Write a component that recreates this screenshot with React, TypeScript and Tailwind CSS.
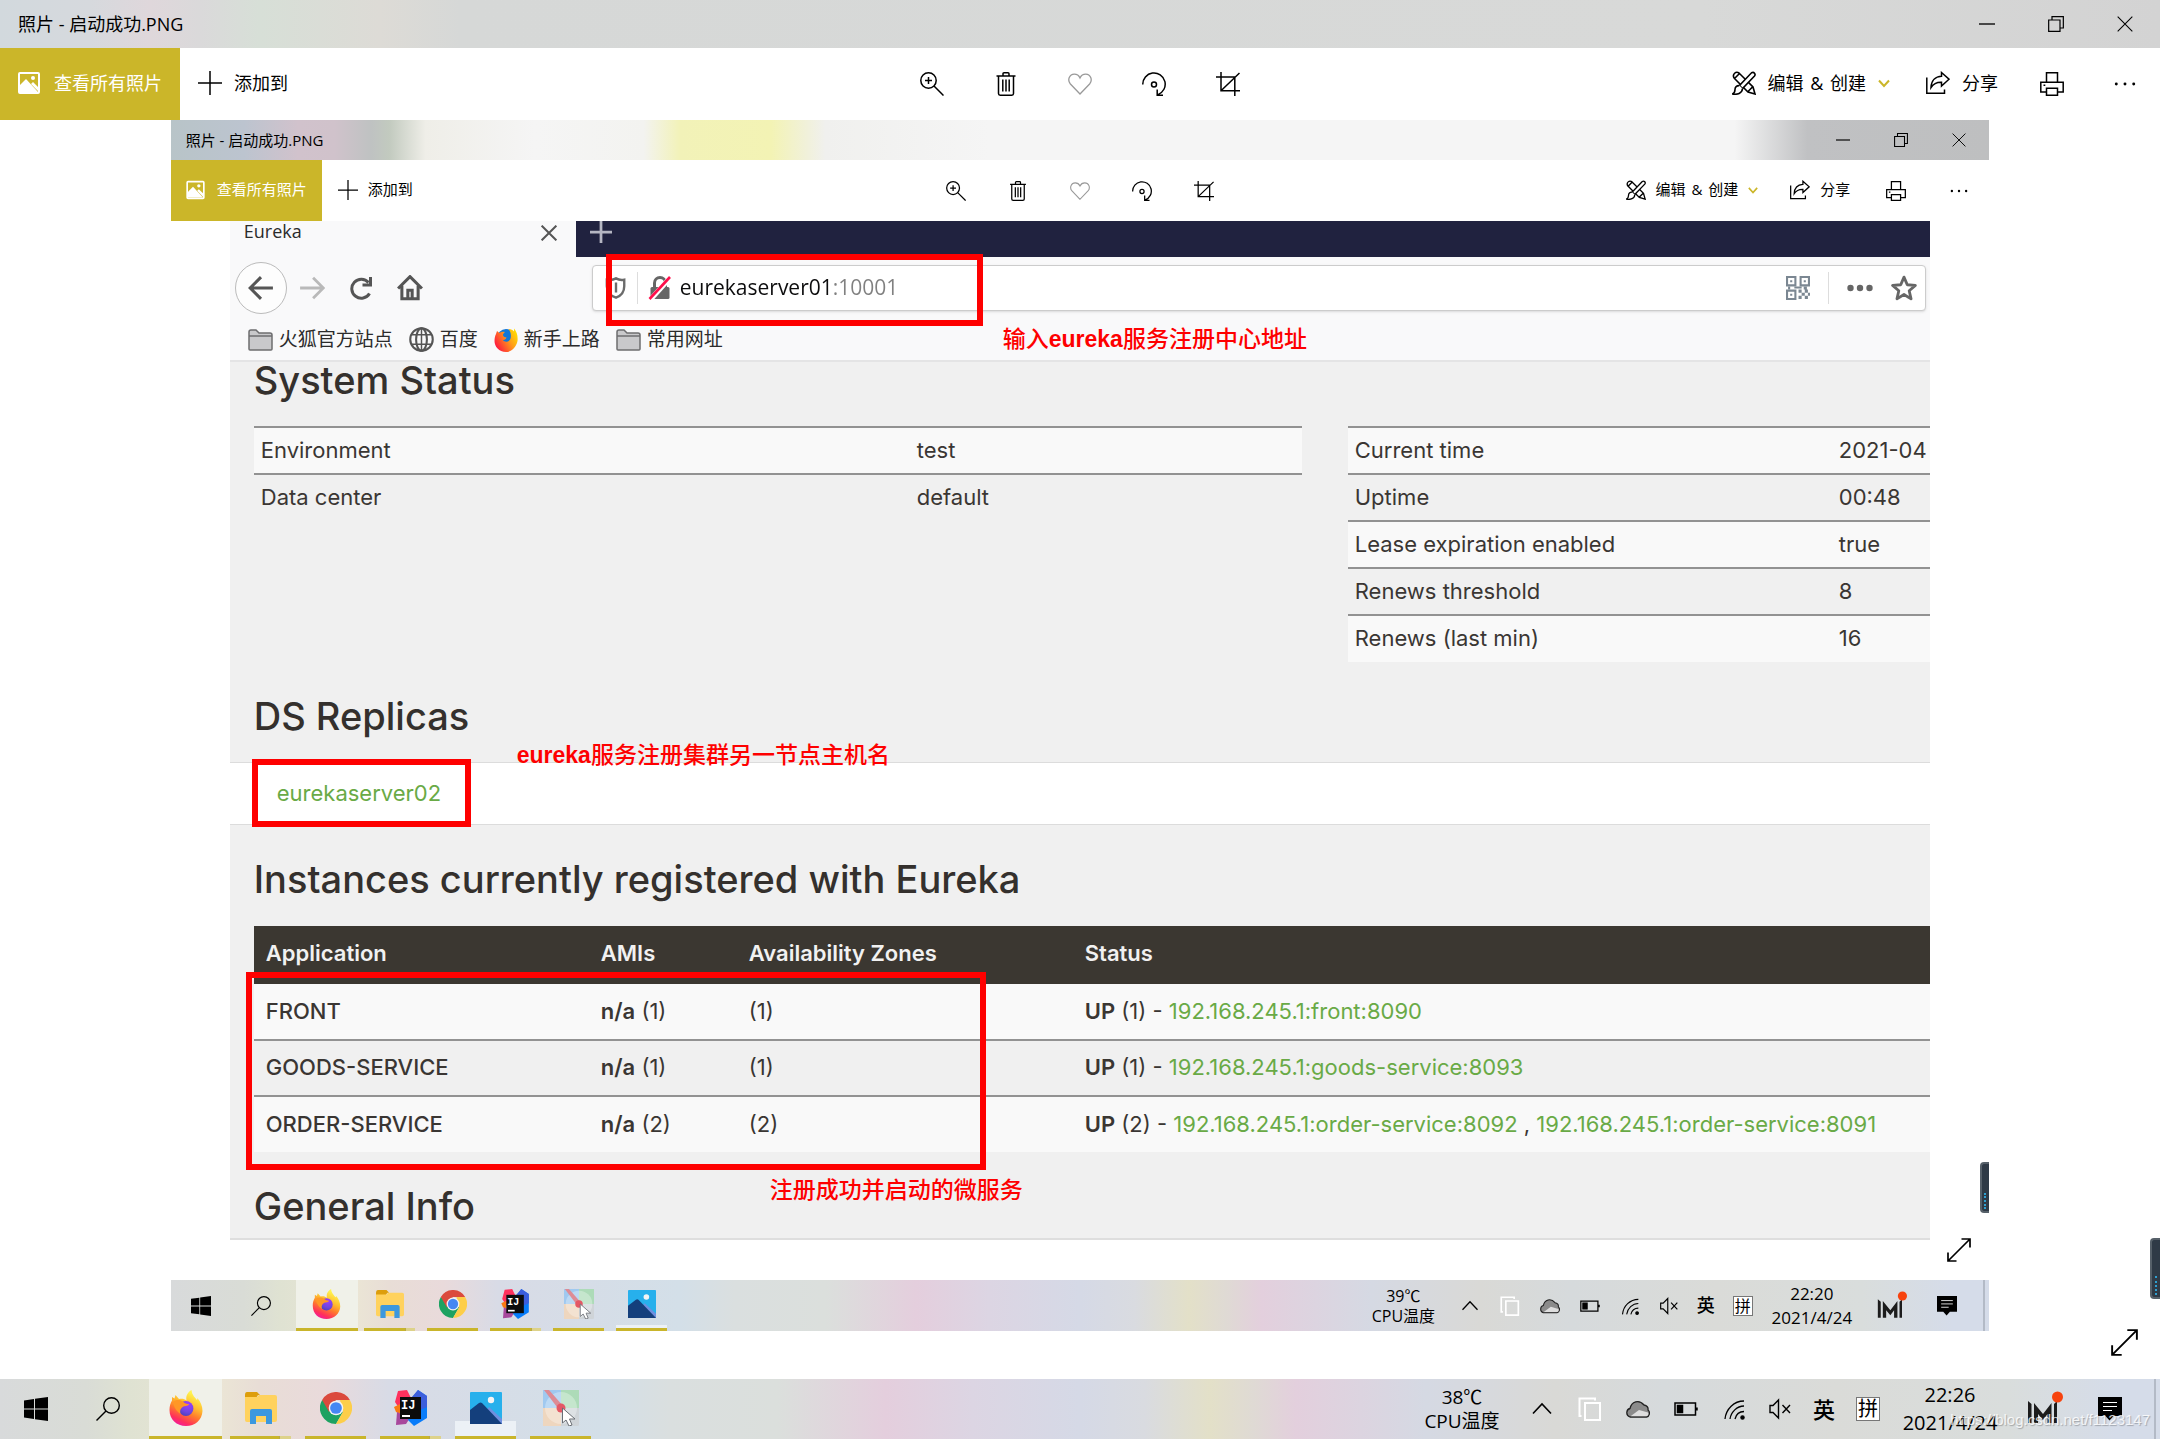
import React, { useId } from "react";

type Size = "lg" | "sm";

/* ---------- line icons of the photo viewer ---------- */

function Line({ className, children, w = 1.5 }: { className: string; children: React.ReactNode; w?: number }) {
  return (
    <svg viewBox="0 0 24 24" className={className} fill="none" stroke="currentColor" strokeWidth={w} aria-hidden="true">
      {children}
    </svg>
  );
}

const PictureIcon = ({ className }: { className: string }) => (
  <svg viewBox="0 0 22 24" className={className} aria-hidden="true">
    <rect x="1" y="2" width="20" height="20" rx="1" fill="none" stroke="white" strokeWidth="2" />
    <path d="M2 14 L8 8 L20 21 H2 Z" fill="white" />
    <path d="M13 13 L15 11 L20 16 V20 Z" fill="white" />
    <circle cx="15" cy="7" r="2" fill="white" />
  </svg>
);

const ZoomIcon = ({ className }: { className: string }) => (
  <Line className={className}>
    <circle cx="8.5" cy="8.5" r="7.7" />
    <path d="M14 14 L23.5 23.5 M8.5 5 V12 M5 8.5 H12" />
  </Line>
);

const TrashIcon = ({ className }: { className: string }) => (
  <Line className={className}>
    <path d="M2.5 4 H21.5 M4.5 4 V21.5 Q4.5 23.2 6.2 23.2 H17.8 Q19.5 23.2 19.5 21.5 V4 M9 4 V1.8 Q9 0.8 10 0.8 H14 Q15 0.8 15 1.8 V4 M8.8 7.5 V19.5 M12 7.5 V19.5 M15.2 7.5 V19.5" />
  </Line>
);

const HeartIcon = ({ className }: { className: string }) => (
  <Line className={className} w={1.3}>
    <path d="M12 22 L2.4 12 C-1 8 1.5 2.2 6.3 2.2 C9 2.2 11 3.8 12 6 C13 3.8 15 2.2 17.7 2.2 C22.5 2.2 25 8 21.6 12 Z" />
  </Line>
);

const RotateIcon = ({ className }: { className: string }) => (
  <Line className={className}>
    <path d="M0.8 12.5 A11.2 11.2 0 1 1 16 22.6 M15.2 17.5 V23.2 H21" />
    <circle cx="12" cy="12.5" r="2.5" />
  </Line>
);

const CropIcon = ({ className }: { className: string }) => (
  <Line className={className}>
    <path d="M5 0 V18.8 H24 M0 5 H18.8 V24 M5 18.8 L23.5 1" />
  </Line>
);

const EditIcon = ({ className }: { className: string }) => (
  <Line className={className} w={1.6}>
    <path d="M2 7 C0 3 4 0 7 2 L21 16 L23 23 L16 21 L2 7 M2.5 7.5 L7.5 2.5 M16 20.5 L20.7 15.8" />
    <path d="M19.5 1.8 C22 0.5 24 3 22.5 5 L10.5 17.5 L7.5 14.5 Z" fill="white" />
    <path d="M7.3 14.6 C4.6 14.4 3 16.2 3 18.5 C3 21 1.5 22.5 0.5 23 C5 23.8 10.4 22.5 10.5 17.6" fill="white" />
  </Line>
);

const ShareIcon = ({ className }: { className: string }) => (
  <Line className={className}>
    <path d="M0.8 6.5 V22.2 H18.5 V18.5" />
    <path d="M15.5 1.5 L23 8.2 L15.5 15 V11.2 C10 11 7.5 12.5 5 16.5 C5.3 9.5 9.5 5.6 15.5 5.3 Z" />
  </Line>
);

const PrintIcon = ({ className }: { className: string }) => (
  <Line className={className}>
    <path d="M6.5 10 V0.8 H17.5 V10 M6.5 20 H0.8 V10.2 H23.2 V20 H17.5 M6.5 16.2 H17.5 V23.2 H6.5 Z M3.5 13.2 H5.3" />
  </Line>
);

const ChevronDown = ({ className }: { className: string }) => (
  <Line className={className} w={4}>
    <path d="M2 7 L12 18 L22 7" />
  </Line>
);

const MoreIcon = ({ className }: { className: string }) => (
  <svg viewBox="0 0 24 24" className={className} aria-hidden="true">
    <circle cx="2.5" cy="12" r="1.6" />
    <circle cx="12" cy="12" r="1.6" />
    <circle cx="21.5" cy="12" r="1.6" />
  </svg>
);

const PlusIcon = ({ className }: { className: string }) => (
  <Line className={className}>
    <path d="M12 0 V24 M0 12 H24" />
  </Line>
);

const MinimizeIcon = ({ className }: { className: string }) => (
  <Line className={className} w={2}>
    <path d="M0 12 H24" />
  </Line>
);

const RestoreIcon = ({ className }: { className: string }) => (
  <Line className={className} w={1.8}>
    <path d="M1 6 H18 V23 H1 Z M6 6 V1 H23 V18 H18" />
  </Line>
);

const CloseIcon = ({ className, w = 1.6 }: { className: string; w?: number }) => (
  <Line className={className} w={w}>
    <path d="M1 1 L23 23 M23 1 L1 23" />
  </Line>
);

const ExpandIcon = ({ className }: { className: string }) => (
  <Line className={className} w={1.7}>
    <path d="M1 23 L23 1 M14.5 1 H23 V9.5 M1 14.5 V23 H9.5" />
  </Line>
);

/* ---------- taskbar icons ---------- */

const WindowsIcon = ({ className }: { className: string }) => (
  <svg viewBox="0 0 24 24" className={className} aria-hidden="true">
    <path d="M0 3.4 L10 2 V11.5 H0 Z M11 1.8 L24 0 V11.5 H11 Z M0 12.5 H10 V22 L0 20.6 Z M11 12.5 H24 V24 L11 22.2 Z" />
  </svg>
);

const SearchIcon = ({ className }: { className: string }) => (
  <Line className={className} w={1.4}>
    <circle cx="15.5" cy="8.5" r="7.8" />
    <path d="M10 14 L0.5 23.5" />
  </Line>
);

function FirefoxIcon({ className }: { className: string }) {
  const id = useId();
  return (
    <svg viewBox="0 0 34 36" className={className} aria-hidden="true">
      <defs>
        <linearGradient id={id + "a"} x1="0.75" y1="0" x2="0.3" y2="1">
          <stop offset="0.1" stopColor="#fff44f" />
          <stop offset="0.4" stopColor="#ffbd2f" />
          <stop offset="0.62" stopColor="#ff7a2c" />
          <stop offset="0.85" stopColor="#ff2f5c" />
          <stop offset="1" stopColor="#f01ba0" />
        </linearGradient>
        <radialGradient id={id + "b"} cx="0.65" cy="0.2" r="0.9">
          <stop offset="0" stopColor="#a03cff" />
          <stop offset="0.6" stopColor="#7046e0" />
          <stop offset="1" stopColor="#4a3fb5" />
        </radialGradient>
      </defs>
      <path d="M0.5 20 C0.5 16 1.5 13 3 10.5 L3 7 L5.5 8.5 L6.5 5 L10 9 C13 8.2 15.5 8.8 17.5 10.5 C16.5 5.5 19 2 22.5 0 C22.8 5 26.5 8 28 10 C28.4 9.4 28.4 8.8 28.3 8 C31.5 11.5 33.5 16 33.5 21 C33 30 26 36 17 36 C7.5 36 0.5 29.5 0.5 20 Z" fill={"url(#" + id + "a)"} />
      <circle cx="17" cy="18.5" r="7.4" fill={"url(#" + id + "b)"} />
      <path d="M4 12 C7 9 12 10 14 11.5 C15.5 13.5 18 14 20 14 C19.5 16 16.5 16 14.5 16.5 C12 18 10.5 20 11.5 24 C7 21 5 17 4 12 Z" fill="#ff9726" />
    </svg>
  );
}

const ExplorerIcon = ({ className }: { className: string }) => (
  <svg viewBox="0 0 32 32" className={className} aria-hidden="true">
    <path d="M0 3 Q0 0 2 0 H12 L15 3 H13 L11 6 H0 Z" fill="#dd9e0c" />
    <path d="M0 5 H12 L14 3 H30 Q32 3 32 5 V28 Q32 30 30 30 H2 Q0 30 0 28 Z" fill="#ffd25e" />
    <path d="M5 32 V19 Q5 17 7 17 H25 Q27 17 27 19 V32 H21 V24 H11 V32 Z" fill="#3c98de" />
  </svg>
);

const ChromeIcon = ({ className }: { className: string }) => (
  <svg viewBox="0 0 48 48" className={className} aria-hidden="true">
    <path d="M3.2 12 A24 24 0 0 0 24 48 L34.4 30 L24 24 Z" fill="#1da261" />
    <path d="M44.8 12 A24 24 0 0 1 24 48 L34.4 30 L30 12 Z" fill="#fdce49" />
    <path d="M24 12 H44.8 A24 24 0 0 0 3.2 12 L13.6 30 Z" fill="#db4a3d" />
    <circle cx="24" cy="24" r="11" fill="#f3f3f3" />
    <circle cx="24" cy="24" r="8.8" fill="#4587f3" />
  </svg>
);

const IdeaIcon = ({ className }: { className: string }) => (
  <svg viewBox="0 0 34 36" className={className} aria-hidden="true">
    <path d="M4 1 L13 0 L17 8 L9 24 L1 12 Z" fill="#fe315d" />
    <path d="M0 17 L6 14 V24 L2 22 Z" fill="#f97a12" />
    <path d="M3 22 L16 28 L12 34 L2 35 Z" fill="#a8489c" />
    <path d="M24 0 L33 6 L33 28 L20 36 L14 30 L18 8 Z" fill="#087cfa" />
    <path d="M24 0 L33 6 V17 L26 20 L17 8 Z" fill="#3c5edc" />
    <rect x="6" y="7" width="21" height="22" fill="#0c0c0c" />
    <rect x="8" y="25" width="8" height="2" fill="white" />
    <text x="7" y="19" fontSize="12" fontWeight="700" fontFamily="Liberation Mono, monospace" fill="white">IJ</text>
  </svg>
);

const PhotosIcon = ({ className }: { className: string }) => (
  <svg viewBox="0 0 32 32" className={className} aria-hidden="true">
    <rect width="32" height="32" rx="1" fill="#27b0ec" />
    <path d="M15 20 L19 15 L32 27 V32 H15 Z" fill="#6f8fdf" />
    <path d="M0 18 L9 11 Q10.5 10 12 11 L32 32 H0 Z" fill="#143f7c" />
    <circle cx="21" cy="8" r="3.2" fill="#f4f4f4" />
  </svg>
);

const PointerAppIcon = ({ className }: { className: string }) => (
  <svg viewBox="0 0 36 36" className={className} aria-hidden="true">
    <rect width="36" height="36" rx="1.5" fill="#cfd4d8" />
    <rect width="18" height="18" fill="#a0c9f0" />
    <rect x="18" width="18" height="18" fill="#addbb8" />
    <rect y="18" width="18" height="18" fill="#eed6be" />
    <circle cx="18" cy="18" r="16" fill="white" opacity="0.3" />
    <path d="M1 0 H6 L21 17 L17 21 Z" fill="#dd8b95" />
    <circle cx="18" cy="18" r="4.5" fill="#e45866" />
    <path d="M19.5 18 V33 L23 30 L26 36 L29 35 L26.5 29 H32 Z" fill="white" stroke="#6b6f75" strokeWidth="1" />
  </svg>
);

/* ---------- tray icons ---------- */

const UpIcon = ({ className }: { className: string }) => (
  <Line className={className} w={1.6}>
    <path d="M3 16.5 L12 7 L21 16.5" />
  </Line>
);

const CopyIcon = ({ className }: { className: string }) => (
  <Line className={className} w={2}>
    <path d="M7 6 H22 V23 H7 Z" stroke="white" />
    <path d="M3.5 19 H1.5 V1.5 H17 V3.5" stroke="white" />
  </Line>
);

const CloudIcon = ({ className }: { className: string }) => (
  <svg viewBox="0 0 24 24" className={className} aria-hidden="true">
    <path d="M4 20 C-0.5 18.5 0 12.5 4 11.5 C5.5 4.5 13 2 18 8 C21 8.5 22.5 10.5 22 13 C24.5 15 23.5 19.5 20.5 20 Z" fill="#8b8b8b" stroke="#222" strokeWidth="1.3" />
    <path d="M4.5 19.2 L13 13 L22 15.5 C23 17 22 19 20.5 19.2 Z" fill="#dedede" />
  </svg>
);

const BatteryIcon = ({ className }: { className: string }) => (
  <Line className={className}>
    <path d="M1 6 H21.5 V18 H1 Z M23 10.5 V13.5" />
    <rect x="3.5" y="8.5" width="5" height="7" fill="currentColor" />
  </Line>
);

const WifiIcon = ({ className }: { className: string }) => (
  <Line className={className} w={1.3}>
    <path d="M3 22 C4 12 12 4 22 4 M8 22 C9 15 15 9 22 9 M13 22 C14 18 17 14.500 22 14.500" />
    <circle cx="20.5" cy="20.5" r="1.6" fill="currentColor" />
  </Line>
);

const MuteIcon = ({ className }: { className: string }) => (
  <Line className={className} w={1.4}>
    <path d="M2 8.5 H5 L10.5 3 V21 L5 15.500 H2 Z M14.5 8 L22 16 M22 8 L14.5 16" />
  </Line>
);

const MLogoIcon = ({ className }: { className: string }) => (
  <svg viewBox="0 0 36 36" className={className} aria-hidden="true">
    <path d="M1 10 L4.5 13 V32 H1 Z M7 12 L16 23 L24.5 12 V32 H20.5 V23 L16 29 L11 23 V32 H7 Z M27 13 L30 10 V32 H27 Z" fill="#1c1c1c" />
    <circle cx="30.5" cy="6" r="5.5" fill="#f7430e" />
  </svg>
);

const MessageIcon = ({ className }: { className: string }) => (
  <svg viewBox="0 0 24 24" className={className} aria-hidden="true">
    <path d="M0 0 H24 V19 H15.5 L11.5 23.5 L7.5 19 H0 Z" />
    <path d="M5 5.5 H19 M5 9.5 H19 M5 13.5 H14" stroke="white" strokeWidth="1" />
  </svg>
);

/* ---------- photo viewer window ---------- */

const look = {
  lg: {
    titleBar:
      "h-12 pl-[18px] text-[18px] bg-[linear-gradient(90deg,#d2d9dd_0px,#d6d9dd_90px,#dfd7db_150px,#dad9da_200px,#d7dfd7_260px,#dddbd6_380px,#d6d8d7_460px,#d8d9d8_1700px,#d3d3d3_2160px)]",
    winBtn: "w-[69px]",
    winIcon: "size-4",
    bar: "h-[72px] text-[18px]",
    gold: "pl-[18px] pr-[18px] gap-3.5",
    pic: "h-6 w-[22px]",
    add: "pl-[18px] gap-3",
    icon: "size-6",
    mid: "w-[74px]",
    right: "gap-9 pr-6",
    pair: "gap-3",
    chev: "size-3",
    print: "mx-1.5",
    more: "ml-2 w-[22px]",
    expand: "size-[27px] right-[22px] bottom-[23px]",
    gadget: "h-[61px] w-2.5 bottom-20",
    task: "h-[60px] bg-[linear-gradient(90deg,#d8dadb_0%,#d9dcd6_4%,#dfe2d2_6%,#ebe6d5_10%,#e8ddd6_12%,#e9dadb_15%,#d8dbe6_18%,#d3dfe8_28%,#dadfdf_31%,#dbdfdc_36%,#e4cedd_41%,#dcd5e3_45%,#d5d9e6_50%,#d9dbe0_53%,#e3e0c8_56%,#dfdad4_58%,#e3cfdd_60%,#d5d9e3_66%,#d9d9d6_72%,#d6dadc_77%,#dadbd8_85%,#d9dddc_93%,#d5dce9_98%)]",
    start: "w-[72px]",
    slots: "ml-[5px] gap-0.5",
    slot: "w-[73px]",
    line: "h-[3px] w-[61px]",
    app: "h-9 w-[34px]",
    app2: "size-8",
    app4: "size-9",
    temp: "w-[112px] text-[19px] leading-6",
    tray: "w-12",
    tray2: "w-11",
    trayIcon: "size-6",
    ime: "text-[22px]",
    imeBox: "size-6 text-[20px]",
    clock: "w-[120px] text-[20px] leading-7",
    mLogo: "w-[70px]",
    mIcon: "size-9",
    msg: "w-[60px]",
    end: "w-5",
  },
  sm: {
    titleBar:
      "h-10 pl-[15px] text-[15px] bg-[linear-gradient(90deg,#b8c4c8_0%,#bcc4cf_4%,#d1c2cc_7%,#d0c2cb_9%,#bfc2c2_11%,#c2cabf_12%,#efeee8_14%,#f5f5f5_20%,#f3f3f0_26%,#f2f2b8_28%,#f3f3b4_33%,#f0f0ee_36%,#f5f5f5_45%,#f5f5f5_86%,#c0c1c3_90%,#bebfc0_100%)]",
    winBtn: "w-[58px]",
    winIcon: "size-3.5",
    bar: "h-[61px] text-[15px]",
    gold: "pl-[15px] pr-[15px] gap-3",
    pic: "h-5 w-[19px]",
    add: "pl-4 gap-2.5",
    icon: "size-5",
    mid: "w-[62px]",
    right: "gap-8 pr-[21px]",
    pair: "gap-2.5",
    chev: "size-2.5",
    print: "mx-1",
    more: "ml-2 w-[18px]",
    expand: "size-6 right-[18px] bottom-[18px]",
    gadget: "h-[51px] w-[9px] bottom-[67px]",
    task: "h-[51px] bg-[linear-gradient(90deg,#d8dadb_0%,#d9dcd6_4%,#dfe2d2_6%,#ebe6d5_10%,#e8ddd6_12%,#e9dadb_15%,#d8dbe6_18%,#d3dfe8_28%,#dadfdf_31%,#dbdfdc_36%,#e4cedd_41%,#dcd5e3_45%,#d5d9e6_50%,#d9dbe0_53%,#e3e0c8_56%,#dfdad4_58%,#e3cfdd_60%,#d5d9e3_66%,#d9d9d6_72%,#d6dadc_77%,#dadbd8_85%,#d9dddc_93%,#d5dce9_98%)]",
    start: "w-[60px]",
    slots: "ml-[5px] gap-px",
    slot: "w-[62px]",
    line: "h-[3px] w-[51px]",
    app: "h-[30px] w-[29px]",
    app2: "size-7",
    app4: "size-[30px]",
    temp: "w-[94px] text-[16px] leading-5",
    tray: "w-10",
    tray2: "w-[37px]",
    trayIcon: "size-5",
    ime: "text-[18px]",
    imeBox: "size-5 text-[16px]",
    clock: "w-[101px] text-[17px] leading-6",
    mLogo: "w-[59px]",
    mIcon: "size-[30px]",
    msg: "w-[51px]",
    end: "w-[17px]",
  },
};

function TitleBar({ size }: { size: Size }) {
  const s = look[size];
  return (
    <header className={"flex items-center justify-between " + s.titleBar}>
      <span>照片 - 启动成功.PNG</span>
      <div className="flex self-stretch pr-px">
        <button aria-label="最小化" className={"flex items-center justify-center " + s.winBtn}>
          <MinimizeIcon className={s.winIcon} />
        </button>
        <button aria-label="还原" className={"flex items-center justify-center " + s.winBtn}>
          <RestoreIcon className={s.winIcon} />
        </button>
        <button aria-label="关闭" className={"flex items-center justify-center " + s.winBtn}>
          <CloseIcon className={s.winIcon} />
        </button>
      </div>
    </header>
  );
}

function Toolbar({ size }: { size: Size }) {
  const s = look[size];
  const mid = "flex items-center justify-center " + s.mid;
  return (
    <div className={"grid grid-cols-[1fr_auto_1fr] bg-white " + s.bar}>
      <div className="flex">
        <button className={"flex items-center bg-[#cbb629] pb-0.5 text-white " + s.gold}>
          <PictureIcon className={s.pic} />
          查看所有照片
        </button>
        <button className={"flex items-center pb-0.5 " + s.add}>
          <PlusIcon className={s.icon} />
          添加到
        </button>
      </div>
      <div className="flex">
        <button aria-label="缩放" className={mid}><ZoomIcon className={s.icon} /></button>
        <button aria-label="删除" className={mid}><TrashIcon className={s.icon} /></button>
        <button aria-label="收藏" className={mid + " text-[#999]"}><HeartIcon className={s.icon} /></button>
        <button aria-label="旋转" className={mid}><RotateIcon className={s.icon} /></button>
        <button aria-label="裁剪" className={mid}><CropIcon className={s.icon} /></button>
      </div>
      <div className={"flex items-center justify-end " + s.right}>
        <button className={"flex items-center pb-0.5 " + s.pair}>
          <EditIcon className={s.icon} />
          <span>编辑<span className="mx-0.5"> &amp; </span>创建</span>
          <span className="text-[#cbb629]"><ChevronDown className={s.chev} /></span>
        </button>
        <button className={"flex items-center pb-0.5 " + s.pair}>
          <ShareIcon className={s.icon} />
          分享
        </button>
        <button aria-label="打印" className={s.print}><PrintIcon className={s.icon} /></button>
        <button aria-label="更多" className={s.more}><MoreIcon className="w-full" /></button>
      </div>
    </div>
  );
}

type AppKey = "firefox" | "explorer" | "chrome" | "idea" | "photos" | "pointer";

function AppSlot({ app, size }: { app: AppKey; size: Size }) {
  const s = look[size];
  const stacked = app === "explorer" || app === "idea";
  return (
    <button
      aria-label={app}
      className={"relative flex flex-col items-center justify-end " + s.slot + (app === "firefox" ? " bg-[#f0f1e9]" : "")}
    >
      {app === "photos" && <span className={"absolute bottom-0 w-5/6 bg-[#ecf1f6] " + (size === "lg" ? "h-[18px]" : "h-1.5")} />}
      <span className="relative flex flex-1 items-center">
        {app === "firefox" && <FirefoxIcon className={s.app} />}
        {app === "explorer" && <ExplorerIcon className={s.app2} />}
        {app === "chrome" && <ChromeIcon className={s.app2} />}
        {app === "idea" && <IdeaIcon className={s.app} />}
        {app === "photos" && <PhotosIcon className={s.app2} />}
        {app === "pointer" && <PointerAppIcon className={s.app4} />}
      </span>
      <span className={"relative flex bg-[#c9b52b] " + (app === "firefox" ? "h-[3px] w-full" : s.line)}>
        {stacked && <span className="ml-auto w-1/5 border-l border-[#b9a849] bg-[#ddd28a]" />}
      </span>
    </button>
  );
}

function Taskbar({ size, temp, time, apps }: { size: Size; temp: string; time: string; apps: AppKey[] }) {
  const s = look[size];
  const tray = "flex items-center justify-center " + s.tray;
  const tray2 = "flex items-center justify-center " + s.tray2;
  return (
    <footer className={"flex justify-between " + s.task}>
      <div className="flex">
        <button aria-label="开始" className={"flex items-center justify-center " + s.start}><WindowsIcon className={s.trayIcon} /></button>
        <button aria-label="搜索" className={"flex items-center justify-center " + s.start}><SearchIcon className={s.trayIcon} /></button>
        <div className={"flex " + s.slots}>
          {apps.map((a) => <AppSlot key={a} app={a} size={size} />)}
        </div>
      </div>
      <div className="flex">
        <div className={"flex flex-col justify-center text-center " + s.temp}>
          <span>{temp}</span>
          <span>CPU温度</span>
        </div>
        <button aria-label="显示隐藏的图标" className={tray}><UpIcon className={s.trayIcon} /></button>
        <button aria-label="剪贴板" className={tray}><CopyIcon className={s.trayIcon} /></button>
        <button aria-label="云盘" className={tray}><CloudIcon className={s.trayIcon} /></button>
        <button aria-label="电池" className={tray}><BatteryIcon className={s.trayIcon} /></button>
        <button aria-label="网络" className={tray}><WifiIcon className={s.trayIcon} /></button>
        <button aria-label="音量" className={tray2}><MuteIcon className={s.trayIcon} /></button>
        <button className={"font-medium " + tray2 + " " + s.ime}>英</button>
        <button className={tray2}>
          <span className={"flex items-center justify-center border border-[#777] bg-white leading-none " + s.imeBox}>拼</span>
        </button>
        <div className={"flex flex-col justify-center text-center " + s.clock}>
          <span>{time}</span>
          <span>2021/4/24</span>
        </div>
        <button aria-label="小米" className={"flex items-center justify-center " + s.mLogo}><MLogoIcon className={s.mIcon} /></button>
        <button aria-label="通知" className={"flex items-center justify-center " + s.msg}><MessageIcon className={s.trayIcon} /></button>
        <div className={"flex justify-end " + s.end}>
          <span className="w-1.5 border-l-2 border-[#b3bac6]" />
        </div>
      </div>
    </footer>
  );
}

function PhotoWindow({ size, temp, time, apps, children }: { size: Size; temp: string; time: string; apps: AppKey[]; children: React.ReactNode }) {
  const s = look[size];
  return (
    <section className="flex flex-col bg-white">
      <TitleBar size={size} />
      <Toolbar size={size} />
      <div className="relative">
        {children}
        <span className={"absolute right-0 flex justify-center rounded-l-sm border-2 border-r-0 border-[#566069] bg-[#2f3a46] " + s.gadget}>
          <span className="mb-0.5 h-1/3 w-[3px] self-end border-l-2 border-dotted border-[#2f9fd0]" />
        </span>
        <button aria-label="全屏" className={"absolute " + s.expand}><ExpandIcon className="size-full" /></button>
      </div>
      <Taskbar size={size} temp={temp} time={time} apps={apps} />
    </section>
  );
}

/* ---------- browser shown in the photo ---------- */

const FolderIcon = () => (
  <svg viewBox="0 0 25 22" className="w-[25px]" aria-hidden="true">
    <path d="M1 20 V3 Q1 1 3 1 H8 L11 4 H22 Q24 4 24 6 V20 Q24 21 23 21 H2 Q1 21 1 20 Z" fill="#c9c9cb" stroke="#6d6d6f" strokeWidth="1.5" />
    <path d="M1 7 H24" stroke="#6d6d6f" strokeWidth="1.5" />
  </svg>
);

const GlobeIcon = () => (
  <svg viewBox="0 0 24 24" className="w-[25px]" fill="none" stroke="#555" strokeWidth="2" aria-hidden="true">
    <circle cx="12" cy="12" r="10.8" />
    <ellipse cx="12" cy="12" rx="5.2" ry="10.8" />
    <path d="M12 1 V23 M2.5 7.5 H21.5 M2.5 16.5 H21.5" strokeWidth="1.4" />
  </svg>
);

function OldFirefoxIcon() {
  const id = useId();
  return (
    <svg viewBox="0 0 24 24" className="w-6" aria-hidden="true">
      <defs>
        <linearGradient id={id} x1="1" y1="0.1" x2="0" y2="0.7">
          <stop offset="0" stopColor="#ffe900" />
          <stop offset="0.45" stopColor="#ff9a1a" />
          <stop offset="1" stopColor="#ff1440" />
        </linearGradient>
      </defs>
      <circle cx="12" cy="10" r="9" fill="#1277d8" />
      <path
        fillRule="evenodd"
        d="M2 6 L3 3 L5.5 5 C7 3.5 9 3.5 11 4 C9 5.5 8 7.5 10.5 9 L12.500 9.500 C12 11.500 10 12 9 12.500 C11 14.500 15.500 14 16.500 10.500 C17.500 7 16.500 3.500 14.500 1 C17 1 19 2 20 3.500 L20 0.500 C23 4 24 8 23.500 13 C22 20 17 24 12 24 C5 24 0.5 18.5 0.5 13 C0.5 10 1 8 2 6 Z"
        fill={"url(#" + id + ")"}
      />
    </svg>
  );
}

const QrIcon = () => (
  <svg viewBox="0 0 23 23" className="w-6" fill="#7b8792" aria-hidden="true">
    <path d="M0 0 H10 V10 H0 Z M2 2 V8 H8 V2 Z M13 0 H23 V10 H13 Z M15 2 V8 H21 V2 Z M0 13 H10 V23 H0 Z M2 15 V21 H8 V15 Z" fillRule="evenodd" />
    <path d="M4 4 H6 V6 H4 Z M17 4 H19 V6 H17 Z M4 17 H6 V19 H4 Z M2 10 H4 V13 H2 Z M8 10 H15 V12 H8 Z M17 10 H20 V13 H17 Z M12 13 H15 V16 H12 Z M15 16 H18 V19 H15 Z M18 13 H21 V16 H18 Z M12 19 H15 V22 H12 Z M18 19 H21 V22 H18 Z M21 16 H23 V19 H21 Z" />
  </svg>
);

function BrowserChrome() {
  return (
    <div className="border-b-2 border-[#e4e4e5] bg-[#f9f9fa] text-[#2b2b2b]">
      <div className="flex h-9 bg-[#20223f]">
        <div className="flex w-[346px] justify-between bg-[#f9f9fa] pr-[19px] pl-3.5">
          <span className="text-[18px] leading-5">Eureka</span>
          <button aria-label="关闭标签页" className="mt-1 size-4 text-[#555]"><CloseIcon className="size-4" w={3} /></button>
        </div>
        <button aria-label="新标签页" className="ml-3.5 size-[22px] text-[#b5b6c2]">
          <Line className="size-[22px]" w={3}><path d="M12 0 V24 M0 12 H24" /></Line>
        </button>
      </div>
      <div className="flex h-[62px] items-center pr-1">
        <div className="flex w-[362px] items-center gap-6 pl-[5px] text-[#555]">
          <button aria-label="后退" className="flex size-[52px] items-center justify-center rounded-full border border-[#bbb] bg-[#fdfdfd]">
            <Line className="size-[26px]" w={2.8}><path d="M23 12 H2 M12 2 L2 12 L12 22" /></Line>
          </button>
          <div className="-ml-3 flex items-center gap-6">
            <button aria-label="前进" className="text-[#b9b9b9]">
              <Line className="size-[26px]" w={2.6}><path d="M1 12 H22 M13 2.5 L22.5 12 L13 21.5" /></Line>
            </button>
            <button aria-label="刷新">
              <Line className="size-6" w={3}><path d="M20.5 17.5 A9.5 9.5 0 1 1 19.5 6.5 M21.5 1 V9 H13.5" /></Line>
            </button>
            <button aria-label="主页">
              <Line className="size-[26px]" w={2.8}><path d="M1 12.5 L12 1.5 L23 12.5 M4.5 10 V22 H19.5 V10 M10 22 V14 H14 V22" /></Line>
            </button>
          </div>
        </div>
        <div className="relative flex h-[46px] flex-1 items-center rounded border border-[#ccc] bg-white pr-2 pl-3 shadow-sm">
          <Line className="size-[22px] text-[#6b6b6b]" w={2.6}>
            <path d="M2 3 Q8 4 12 1.5 Q16 4 21 3 V10 Q21 19 12 22.5 Q2 19 2 10 Z M12 6 V17" />
          </Line>
          <span className="mx-2.5 h-8 w-px bg-[#ddd]" />
          <svg viewBox="0 0 24 24" className="size-6" aria-hidden="true">
            <path d="M6.5 11 V7 A5.5 5.5 0 0 1 17.5 7 V11" fill="none" stroke="#666" strokeWidth="3" />
            <rect x="2.5" y="11" width="19" height="12" rx="1.5" fill="#666" />
            <path d="M3 23 L22.5 1.5" stroke="white" strokeWidth="5" />
            <path d="M1.5 23 L22 1" stroke="#ff0f4b" strokeWidth="2.6" />
          </svg>
          <input
            aria-label="网址"
            defaultValue="eurekaserver01:10001"
            className="ml-2 min-w-0 flex-1 bg-[linear-gradient(90deg,#0c0c0d_153px,#808080_153px)] bg-clip-text text-[21px] text-transparent outline-none"
          />
          <button aria-label="二维码"><QrIcon /></button>
          <span className="mx-[18px] h-8 w-px bg-[#ddd]" />
          <button aria-label="页面操作">
            <svg viewBox="0 0 26 8" className="w-[26px] fill-[#666]" aria-hidden="true">
              <circle cx="3.5" cy="4" r="3.2" /><circle cx="13" cy="4" r="3.2" /><circle cx="22.5" cy="4" r="3.2" />
            </svg>
          </button>
          <button aria-label="收藏此页" className="ml-[18px] text-[#666]">
            <Line className="size-[26px]" w={2.6}><path d="M12 2 L15 9 L22.5 9.6 L16.8 14.5 L18.5 22 L12 18 L5.5 22 L7.2 14.5 L1.5 9.6 L9 9 Z" strokeLinejoin="round" /></Line>
          </button>
          <span className="pointer-events-none absolute -top-3 left-[13px] h-[72px] w-[377px] border-[6px] border-[#fe0000]" />
          <Note className="top-[59px] left-[410px]">输入<b>eureka</b>服务注册中心地址</Note>
        </div>
      </div>
      <nav className="flex h-[41px] items-center gap-4 pl-[18px] text-[19px]">
        <a href="#fox" className="flex items-center gap-1.5"><FolderIcon />火狐官方站点</a>
        <a href="#baidu" className="flex items-center gap-1.5"><GlobeIcon />百度</a>
        <a href="#start" className="flex items-center gap-1.5"><OldFirefoxIcon />新手上路</a>
        <a href="#sites" className="flex items-center gap-1.5"><FolderIcon />常用网址</a>
      </nav>
    </div>
  );
}

function Note({ className, children }: { className: string; children: React.ReactNode }) {
  return (
    <span className={"pointer-events-none absolute z-10 font-['Liberation_Sans','Noto_Sans_CJK_SC',sans-serif] text-[23px] leading-7 font-medium whitespace-nowrap text-[#fe0000] " + className}>
      {children}
    </span>
  );
}

function StatusTable({ rows, first }: { rows: string[][]; first: string }) {
  return (
    <table className="w-[1048px] shrink-0 table-fixed self-start">
      <tbody>
        {rows.map(([k, v]) => (
          <tr key={k} className="h-[47px] border-t-2 border-[#929292] odd:bg-[#f9f9f9]">
            <td className={"px-[7px] pb-0.5 " + first}>{k}</td>
            <td className="px-[7px] pb-0.5 whitespace-nowrap">{v}</td>
          </tr>
        ))}
      </tbody>
    </table>
  );
}

const services = [
  { name: "FRONT", count: 1, hosts: ["192.168.245.1:front:8090"] },
  { name: "GOODS-SERVICE", count: 1, hosts: ["192.168.245.1:goods-service:8093"] },
  { name: "ORDER-SERVICE", count: 2, hosts: ["192.168.245.1:order-service:8092", "192.168.245.1:order-service:8091"] },
];

const h = "pl-6 text-[38px] leading-9 font-medium text-[#34302d]";

function EurekaPage() {
  return (
    <main className="border-b-2 border-[#dedede] bg-[#f0f0f0] pb-3.5 font-['Inter',sans-serif] text-[22px] leading-7 text-[#3a3633] [font-optical-sizing:none]">
      <h1 className={h}>System Status</h1>
      <div className="mt-7 flex gap-[46px] overflow-hidden pl-6">
        <StatusTable first="w-[656px]" rows={[["Environment", "test"], ["Data center", "default"]]} />
        <StatusTable
          first="w-[484px]"
          rows={[
            ["Current time", "2021-04"],
            ["Uptime", "00:48"],
            ["Lease expiration enabled", "true"],
            ["Renews threshold", "8"],
            ["Renews (last min)", "16"],
          ]}
        />
      </div>
      <h1 className={h + " mt-9"}>DS Replicas</h1>
      <div className="relative mt-7 flex h-[63px] items-center border-y border-[#dcdcdc] bg-white pb-0.5 pl-[47px]">
        <a href="#eurekaserver02" className="text-[#69aa46]">eurekaserver02</a>
        <span className="pointer-events-none absolute -top-1 left-[22px] h-[68px] w-[219px] border-[6px] border-[#fe0000]" />
        <Note className="-top-[22px] left-[287px]"><b>eureka</b>服务注册集群另一节点主机名</Note>
      </div>
      <h1 className={h + " mt-9"}>Instances currently registered with Eureka</h1>
      <div className="relative mt-[29px] pl-6">
        <table className="w-full table-fixed">
          <thead>
            <tr className="h-[58px] bg-[#3b3731] text-left text-[#f1f1f1]">
              <th className="w-[335px] px-3 pb-1 font-semibold">Application</th>
              <th className="w-[148px] px-3 pb-1 font-semibold">AMIs</th>
              <th className="w-[336px] px-3 pb-1 font-semibold">Availability Zones</th>
              <th className="px-3 pb-1 font-semibold">Status</th>
            </tr>
          </thead>
          <tbody>
            {services.map((s, i) => (
              <tr key={s.name} className={"h-14 odd:bg-[#f9f9f9]" + (i > 0 ? " border-t-2 border-[#929292]" : "")}>
                <td className="px-3 pb-0.5 font-medium">{s.name}</td>
                <td className="px-3 pb-0.5"><b className="font-semibold">n/a</b> ({s.count})</td>
                <td className="px-3 pb-0.5">({s.count})</td>
                <td className="px-3 pb-0.5 whitespace-nowrap">
                  <b className="font-semibold">UP</b> ({s.count}) -{" "}
                  {s.hosts.map((host, j) => (
                    <React.Fragment key={host}>
                      {j > 0 && " , "}
                      <a href={"#" + host} className="text-[#69aa46]">{host}</a>
                    </React.Fragment>
                  ))}
                </td>
              </tr>
            ))}
          </tbody>
        </table>
        <span className="pointer-events-none absolute top-[46px] left-4 h-[198px] w-[740px] border-[6px] border-[#fe0000]" />
        <Note className="top-[250px] left-[540px]">注册成功并启动的微服务</Note>
      </div>
      <h1 className={h + " mt-9"}>General Info</h1>
    </main>
  );
}

export default function App() {
  return (
    <div className="relative min-h-screen bg-white font-['Open_Sans','Noto_Sans_CJK_SC',sans-serif] text-black">
      <PhotoWindow size="lg" temp="38℃" time="22:26" apps={["firefox", "explorer", "chrome", "idea", "photos", "pointer"]}>
        <div className="mx-auto w-[84.2%] pb-12">
          <PhotoWindow size="sm" temp="39℃" time="22:20" apps={["firefox", "explorer", "chrome", "idea", "pointer", "photos"]}>
            <div className="mx-auto w-[93.5%] pb-10">
              <BrowserChrome />
              <EurekaPage />
            </div>
          </PhotoWindow>
        </div>
      </PhotoWindow>
      <span className="pointer-events-none absolute right-2.5 bottom-2 font-['Liberation_Sans',sans-serif] text-[15px] leading-6 text-white/80 [text-shadow:1px_1px_1px_rgb(0_0_0/0.25)]">
        https://blog.csdn.net/f1123147
      </span>
    </div>
  );
}
